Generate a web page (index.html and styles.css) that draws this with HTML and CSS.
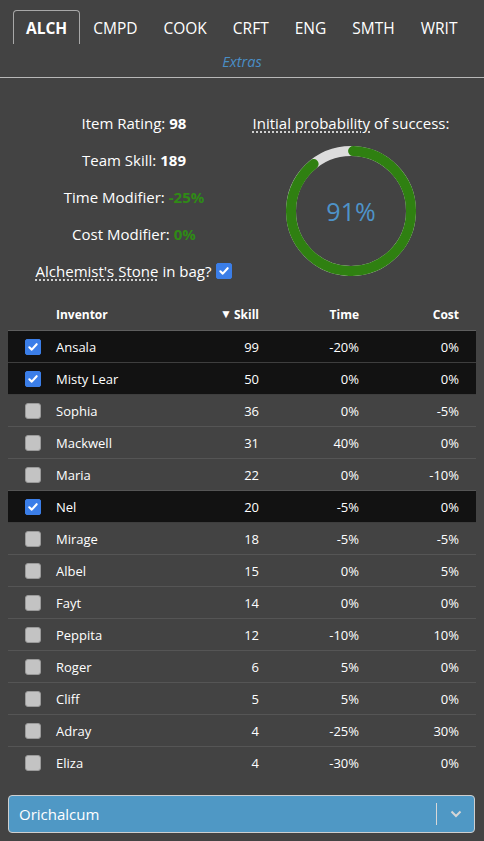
FILE: index.html
```html
<!DOCTYPE html>
<html>
<head>
<meta charset="utf-8">
<link rel="stylesheet" href="styles.css">
</head>
<body>
<div class="tabs">
  <div class="tab active">ALCH</div>
  <div class="tab">CMPD</div>
  <div class="tab">COOK</div>
  <div class="tab">CRFT</div>
  <div class="tab">ENG</div>
  <div class="tab">SMTH</div>
  <div class="tab">WRIT</div>
</div>
<div class="extras">Extras</div>
<div class="stats">
  <div class="left">
    <div class="line">Item Rating: <b>98</b></div>
    <div class="line">Team Skill: <b>189</b></div>
    <div class="line">Time Modifier: <b class="green">-25%</b></div>
    <div class="line">Cost Modifier: <b class="green">0%</b></div>
    <div class="line"><abbr>Alchemist's Stone</abbr> in bag? <span class="cb on small"><svg viewBox="0 0 16 16"><path d="M3.8 8.3 L6.6 11 L12.2 4.8" fill="none" stroke="#fff" stroke-width="2.4" stroke-linecap="round" stroke-linejoin="round"/></svg></span></div>
  </div>
  <div class="right">
    <div class="line"><abbr>Initial probability</abbr> of success:</div>
    <div class="donut">
      <svg viewBox="0 0 130 130" width="130" height="130">
        <circle cx="65" cy="65" r="60" fill="none" stroke="#dcdcdc" stroke-width="10"/>
        <circle cx="65" cy="65" r="60" fill="none" stroke="#2f8011" stroke-width="10" stroke-linecap="round" stroke-dasharray="334 400" transform="rotate(-88 65 65)"/>
      </svg>
      <span class="pct">91%</span>
    </div>
  </div>
</div>
<div class="table">
  <div class="row head">
    <div></div>
    <div class="name">Inventor</div>
    <div class="num"><span class="sort">▼</span>Skill</div>
    <div class="num">Time</div>
    <div class="num">Cost</div>
  </div>
  <div class="row sel"><div><span class="cb on"><svg viewBox="0 0 16 16"><path d="M3.8 8.3 L6.6 11 L12.2 4.8" fill="none" stroke="#fff" stroke-width="2.4" stroke-linecap="round" stroke-linejoin="round"/></svg></span></div><div class="name">Ansala</div><div class="num">99</div><div class="num">-20%</div><div class="num">0%</div></div>
  <div class="row sel"><div><span class="cb on"><svg viewBox="0 0 16 16"><path d="M3.8 8.3 L6.6 11 L12.2 4.8" fill="none" stroke="#fff" stroke-width="2.4" stroke-linecap="round" stroke-linejoin="round"/></svg></span></div><div class="name">Misty Lear</div><div class="num">50</div><div class="num">0%</div><div class="num">0%</div></div>
  <div class="row"><div><span class="cb"></span></div><div class="name">Sophia</div><div class="num">36</div><div class="num">0%</div><div class="num">-5%</div></div>
  <div class="row"><div><span class="cb"></span></div><div class="name">Mackwell</div><div class="num">31</div><div class="num">40%</div><div class="num">0%</div></div>
  <div class="row"><div><span class="cb"></span></div><div class="name">Maria</div><div class="num">22</div><div class="num">0%</div><div class="num">-10%</div></div>
  <div class="row sel"><div><span class="cb on"><svg viewBox="0 0 16 16"><path d="M3.8 8.3 L6.6 11 L12.2 4.8" fill="none" stroke="#fff" stroke-width="2.4" stroke-linecap="round" stroke-linejoin="round"/></svg></span></div><div class="name">Nel</div><div class="num">20</div><div class="num">-5%</div><div class="num">0%</div></div>
  <div class="row"><div><span class="cb"></span></div><div class="name">Mirage</div><div class="num">18</div><div class="num">-5%</div><div class="num">-5%</div></div>
  <div class="row"><div><span class="cb"></span></div><div class="name">Albel</div><div class="num">15</div><div class="num">0%</div><div class="num">5%</div></div>
  <div class="row"><div><span class="cb"></span></div><div class="name">Fayt</div><div class="num">14</div><div class="num">0%</div><div class="num">0%</div></div>
  <div class="row"><div><span class="cb"></span></div><div class="name">Peppita</div><div class="num">12</div><div class="num">-10%</div><div class="num">10%</div></div>
  <div class="row"><div><span class="cb"></span></div><div class="name">Roger</div><div class="num">6</div><div class="num">5%</div><div class="num">0%</div></div>
  <div class="row"><div><span class="cb"></span></div><div class="name">Cliff</div><div class="num">5</div><div class="num">5%</div><div class="num">0%</div></div>
  <div class="row"><div><span class="cb"></span></div><div class="name">Adray</div><div class="num">4</div><div class="num">-25%</div><div class="num">30%</div></div>
  <div class="row last"><div><span class="cb"></span></div><div class="name">Eliza</div><div class="num">4</div><div class="num">-30%</div><div class="num">0%</div></div>
</div>
<div class="select">
  <span class="value">Orichalcum</span>
  <span class="divider"></span>
  <svg class="chev" viewBox="0 0 12 8" width="12" height="8"><path d="M1.5 1.5 L6 6 L10.5 1.5" fill="none" stroke="#d6d6d6" stroke-width="2"/></svg>
</div>
</body>
</html>
```
FILE: styles.css
```css
html, body {
  margin: 0;
  padding: 0;
}
body {
  background: #434343;
  color: #fff;
  font-family: "Open Sans", "Noto Sans", sans-serif;
  font-size: 15px;
  width: 484px;
  height: 841px;
  overflow: hidden;
}
.tabs {
  display: flex;
  padding: 10px 0 0 13px;
  height: 34px;
}
.tab {
  padding: 0 12px;
  height: 34px;
  line-height: 34px;
  font-size: 15.5px;
  border: 1px solid transparent;
  border-bottom: none;
  box-sizing: border-box;
  border-top-left-radius: 4px;
  border-top-right-radius: 4px;
}
.tab.active {
  border-color: #a8a8a8;
  font-weight: 700;
  padding: 0 12px;
}
.extras {
  text-align: center;
  font-style: italic;
  color: #4a8ec6;
  font-size: 14.5px;
  height: 33px;
  line-height: 36px;
  border-bottom: 1px solid #b8b8b8;
}
.stats {
  display: flex;
  padding: 35px 0 0 17px;
  height: 218px;
  box-sizing: border-box;
}
.left {
  width: 234px;
  display: flex;
  flex-direction: column;
  align-items: center;
  gap: 17px;
}
.right {
  width: 200px;
  display: flex;
  flex-direction: column;
  align-items: center;
}
.line {
  height: 20px;
  line-height: 20px;
  white-space: nowrap;
  display: flex;
  align-items: center;
  gap: 4px;
}
.line b { font-weight: 700; }
.green { color: #2f8a16; }
abbr {
  text-decoration: underline dotted;
  text-underline-offset: 3px;
}
.donut {
  position: relative;
  width: 130px;
  height: 130px;
  margin-top: 13px;
}
.donut svg { display: block; }
.pct {
  position: absolute;
  inset: 0;
  display: flex;
  align-items: center;
  justify-content: center;
  color: #4e93c9;
  font-size: 25px;
}
.table {
  margin: 0 8px;
}
.row {
  display: grid;
  grid-template-columns: 40px 128px 100px 100px 100px;
  height: 32px;
  align-items: center;
  border-bottom: 1px solid #555;
  box-sizing: border-box;
  font-size: 13px;
}
.row.head {
  height: 35px;
  font-weight: 700;
  font-size: 12px;
  border-bottom: 1px solid #5e5e5e;
  align-items: start;
  padding-top: 10px;
}
.row.sel {
  background: #121212;
  border-bottom-color: #3e3e3e;
}
.row.last { border-bottom: none; }
.row > div:first-child {
  padding-left: 17px;
  display: flex;
}
.name { padding-left: 8px; }
.num {
  text-align: right;
  padding-right: 17px;
}
.sort {
  font-size: 12px;
  margin-right: 2px;
  position: relative;
  top: -1px;
}
.cb {
  width: 16px;
  height: 16px;
  box-sizing: border-box;
  border-radius: 3px;
  background: #c3c3c3;
  border: 1px solid #9a9a9a;
  display: inline-block;
}
.cb.on {
  background: #3b7ee8;
  border-color: #3b7ee8;
  border-radius: 2px;
}
.cb svg { display: block; width: 100%; height: 100%; }
.cb.small { margin-left: 1px; }
.select {
  margin: 16px 9px 0 8px;
  height: 38px;
  box-sizing: border-box;
  background: #4f98c5;
  border: 1px solid #cfcfcf;
  border-radius: 4px;
  display: flex;
  align-items: center;
  padding-left: 10px;
}
.value {
  flex: 1;
  font-size: 15px;
  color: #fff;
}
.divider {
  width: 1px;
  height: 22px;
  background: #d8d8d8;
}
.chev {
  margin: 0 12px 0 13px;
}
```
